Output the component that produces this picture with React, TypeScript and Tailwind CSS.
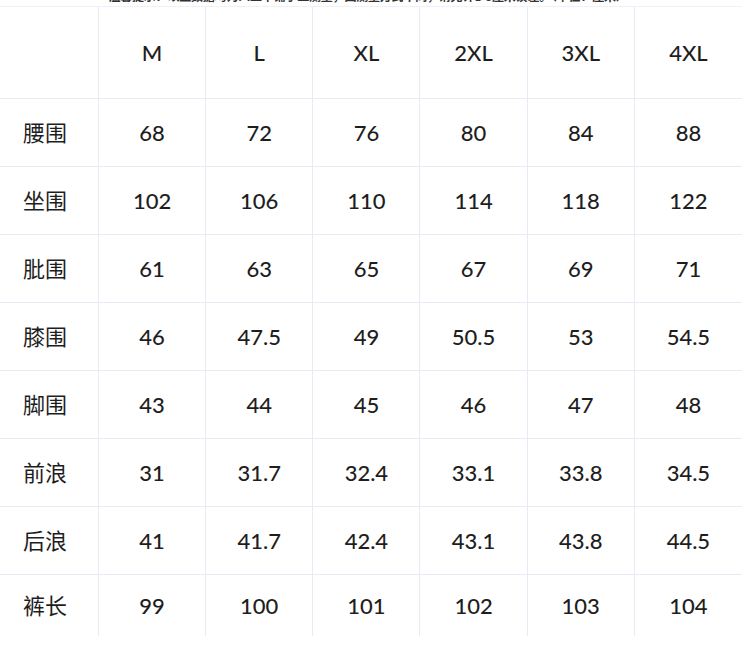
import React from "react";

const sizes = ["M", "L", "XL", "2XL", "3XL", "4XL"];

const rows: { label: string; values: string[] }[] = [
  { label: "腰围", values: ["68", "72", "76", "80", "84", "88"] },
  { label: "坐围", values: ["102", "106", "110", "114", "118", "122"] },
  { label: "肶围", values: ["61", "63", "65", "67", "69", "71"] },
  { label: "膝围", values: ["46", "47.5", "49", "50.5", "53", "54.5"] },
  { label: "脚围", values: ["43", "44", "45", "46", "47", "48"] },
  { label: "前浪", values: ["31", "31.7", "32.4", "33.1", "33.8", "34.5"] },
  { label: "后浪", values: ["41", "41.7", "42.4", "43.1", "43.8", "44.5"] },
  { label: "裤长", values: ["99", "100", "101", "102", "103", "104"] },
];

const font = {
  fontFamily: '"Lato", "Noto Sans CJK SC", sans-serif',
};

export default function App() {
  return (
    <div className="w-[742px] h-[648px] bg-white text-[#1e1e1e] overflow-hidden" style={font}>
      {/* 提示（被截掉的上半部分） */}
      <div className="h-[7px] overflow-hidden border-b border-[#eef1f7]">
        <p className="-mt-[10px] text-center text-[12px] leading-[14px] font-bold text-[#333] pr-[6px] tracking-[-0.2px]">
          温馨提示：以上数据均为人工平铺手工测量，因测量方式不同，请允许1-3厘米误差。（单位：厘米）
        </p>
      </div>

      {/* 表格 */}
      <div className="grid grid-cols-[99px_repeat(6,1fr)]">
        <div className="h-[92px] border-r border-b border-[#e6ebf5]" />
        {sizes.map((s, i) => (
          <div
            key={s}
            className={`h-[92px] flex items-center justify-center text-[22px] font-medium border-b border-[#e6ebf5] ${
              i < 5 ? "border-r" : ""
            }`}
          >
            {s}
          </div>
        ))}

        {rows.map((r, ri) => {
          const last = ri === rows.length - 1;
          return (
            <React.Fragment key={r.label}>
              <div
                className={`${last ? "h-[61px]" : "h-[68px] border-b"} flex items-center justify-center pr-[8px] text-[22px] border-r border-[#e6ebf5]`}
              >
                {r.label}
              </div>
              {r.values.map((v, i) => (
                <div
                  key={i}
                  className={`${last ? "h-[61px]" : "h-[68px] border-b"} flex items-center justify-center text-[22px] font-medium border-[#e6ebf5] ${
                    i < 5 ? "border-r" : ""
                  }`}
                >
                  {v}
                </div>
              ))}
            </React.Fragment>
          );
        })}
      </div>
    </div>
  );
}
